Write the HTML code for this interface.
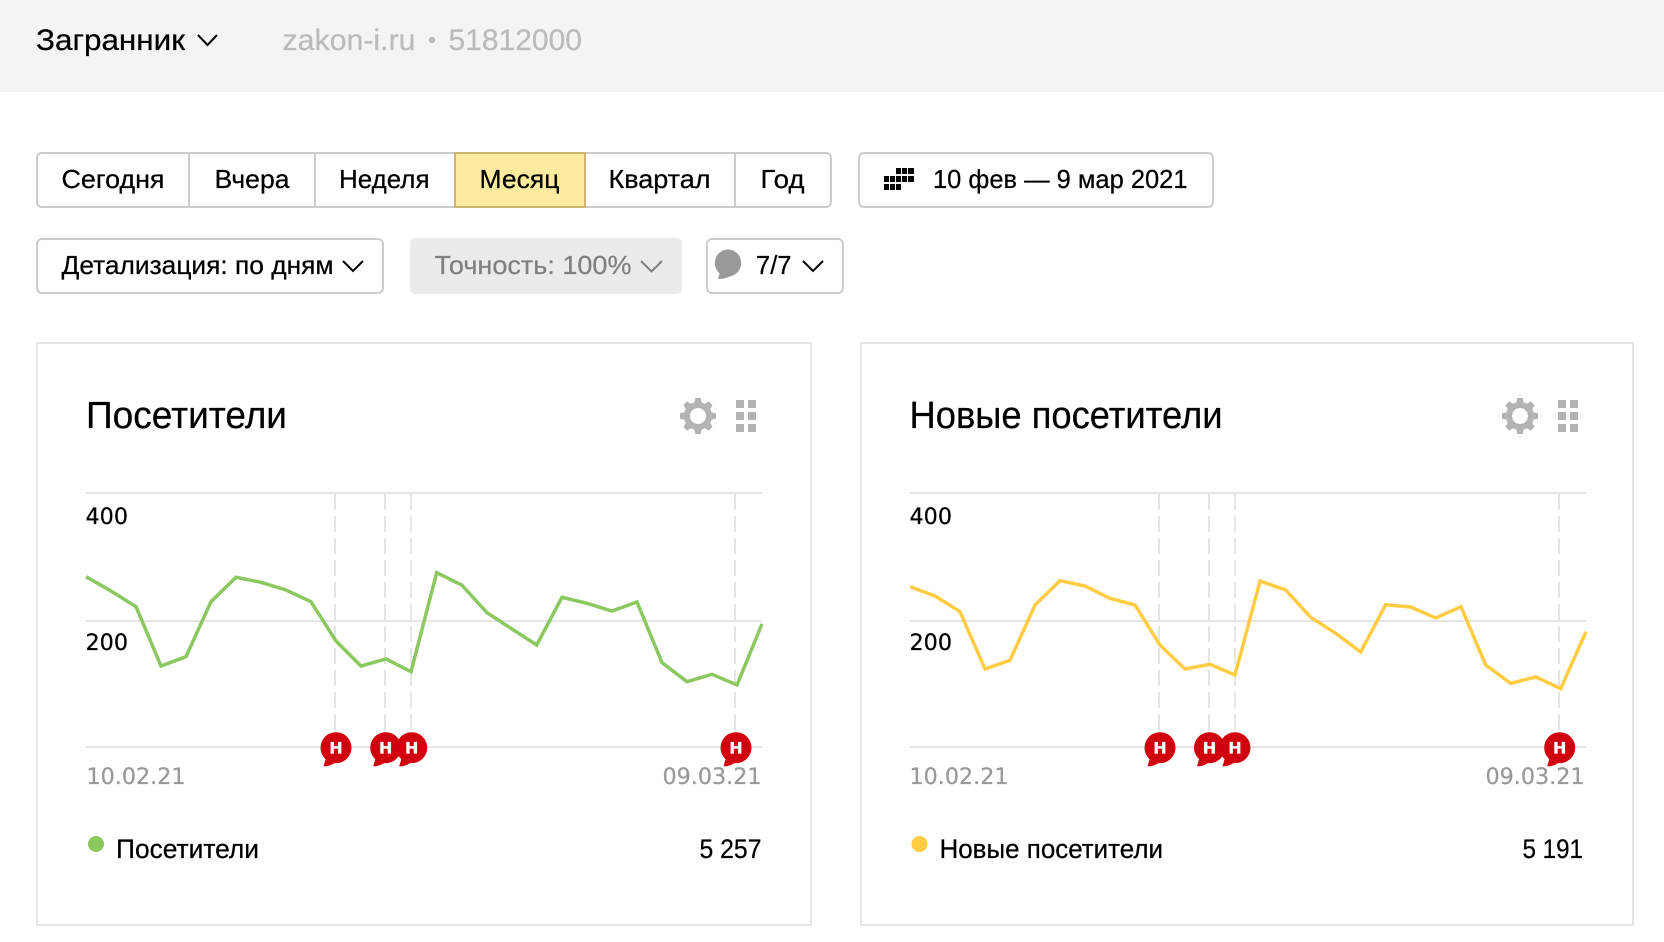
<!DOCTYPE html>
<html lang="ru"><head><meta charset="utf-8"><title>Загранник</title>
<style>
html,body{margin:0;padding:0;background:#fff;width:1664px;height:942px;overflow:hidden}
svg{display:block}
text{font-family:"Liberation Sans",Arial,sans-serif;fill:#000;stroke:#000;stroke-width:.25}
.d{font-family:"DejaVu Sans","Liberation Sans",sans-serif;font-size:22px}
.b{font-size:26px}
.t{font-size:38px}
.l{font-size:27px}
.g{stroke:#e5e5e5;stroke-width:2;fill:none}
.dash{stroke:#e5e5e5;stroke-width:2;stroke-dasharray:16 6;fill:none}
.chev{fill:none;stroke:#000;stroke-width:2}
text.m{font-family:"DejaVu Sans","Liberation Sans",sans-serif;font-size:16px;font-weight:700;fill:#fff;stroke:#fff;text-anchor:middle}
text.gr{fill:#999;stroke:#999}
text.lg{fill:#bbb;stroke:#bbb}
</style></head><body>
<svg width="1664" height="942" viewBox="0 0 1664 942" xmlns="http://www.w3.org/2000/svg">
<defs>
<g id="gear"><circle r="11" fill="none" stroke="#b3b3b3" stroke-width="6"/>
<g fill="#b3b3b3">
<path d="M-4-12.5L-2.6-18H2.6L4-12.5Z"/>
<path d="M-4-12.5L-2.6-18H2.6L4-12.5Z" transform="rotate(45)"/>
<path d="M-4-12.5L-2.6-18H2.6L4-12.5Z" transform="rotate(90)"/>
<path d="M-4-12.5L-2.6-18H2.6L4-12.5Z" transform="rotate(135)"/>
<path d="M-4-12.5L-2.6-18H2.6L4-12.5Z" transform="rotate(180)"/>
<path d="M-4-12.5L-2.6-18H2.6L4-12.5Z" transform="rotate(225)"/>
<path d="M-4-12.5L-2.6-18H2.6L4-12.5Z" transform="rotate(270)"/>
<path d="M-4-12.5L-2.6-18H2.6L4-12.5Z" transform="rotate(315)"/>
</g></g>
<g id="grid" fill="#b3b3b3"><rect width="8" height="8"/><rect x="12" width="8" height="8"/><rect y="12" width="8" height="8"/><rect x="12" y="12" width="8" height="8"/><rect y="24" width="8" height="8"/><rect x="12" y="24" width="8" height="8"/></g>
<g id="mark"><circle r="15.5" fill="#d0000f"/><path d="M-10 10L-12.5 18.6Q-7 19-1 15Z" fill="#d0000f"/></g>
</defs>

<rect width="1664" height="92" fill="#f5f4f2"/>
<text x="36" y="50" font-size="30" textLength="149" lengthAdjust="spacingAndGlyphs">Загранник</text>
<path class="chev" d="M198 35L207.5 45L217 35"/>
<text class="lg" x="282.5" y="50" font-size="30" textLength="133" lengthAdjust="spacingAndGlyphs">zakon-i.ru</text>
<circle cx="432" cy="40" r="3.2" fill="#bbb"/>
<text class="lg" x="448.5" y="50" font-size="30" textLength="133.5" lengthAdjust="spacingAndGlyphs">51812000</text>

<!-- period buttons -->
<rect x="37" y="153" width="794" height="54" rx="5" fill="#fff" stroke="#ccc" stroke-width="2"/>
<rect x="455" y="153" width="130" height="54" fill="#ffeba0" stroke="#cdb56f" stroke-width="2"/>
<path d="M189 153V207M315 153V207M735 153V207" stroke="#ccc" stroke-width="2"/>
<text class="b" x="61.5" y="188" textLength="103" lengthAdjust="spacingAndGlyphs">Сегодня</text>
<text class="b" x="214.5" y="188" textLength="75" lengthAdjust="spacingAndGlyphs">Вчера</text>
<text class="b" x="339" y="188" textLength="90.5" lengthAdjust="spacingAndGlyphs">Неделя</text>
<text class="b" x="479.5" y="188" textLength="80" lengthAdjust="spacingAndGlyphs">Месяц</text>
<text class="b" x="608.5" y="188" textLength="102" lengthAdjust="spacingAndGlyphs">Квартал</text>
<text class="b" x="760.5" y="188" textLength="44" lengthAdjust="spacingAndGlyphs">Год</text>

<!-- date -->
<rect x="859" y="153" width="354" height="54" rx="5" fill="#fff" stroke="#ccc" stroke-width="2"/>
<g fill="#000">
<rect x="896" y="168" width="5" height="6"/><rect x="902" y="168" width="5" height="6"/><rect x="908" y="168" width="6" height="6"/>
<rect x="884" y="176" width="5" height="6"/><rect x="890" y="176" width="5" height="6"/><rect x="896" y="176" width="5" height="6"/><rect x="902" y="176" width="5" height="6"/><rect x="908" y="176" width="6" height="6"/>
<rect x="884" y="184" width="5" height="6"/><rect x="890" y="184" width="5" height="6"/><rect x="896" y="184" width="5" height="6"/>
</g>
<text class="b" x="933" y="188" textLength="254.5" lengthAdjust="spacingAndGlyphs">10 фев — 9 мар 2021</text>

<!-- row 2 -->
<rect x="37" y="239" width="346" height="54" rx="5" fill="#fff" stroke="#ccc" stroke-width="2"/>
<text class="b" x="61.5" y="274" textLength="272" lengthAdjust="spacingAndGlyphs">Детализация: по дням</text>
<path class="chev" stroke-width="2.5" d="M343 261L353 271L363 261"/>

<rect x="410" y="238" width="272" height="56" rx="5" fill="#ebebeb"/>
<text class="b" x="434.5" y="274" style="fill:#808080;stroke:#808080" textLength="197" lengthAdjust="spacingAndGlyphs">Точность: 100%</text>
<path class="chev" style="stroke:#808080" d="M641 261L651.5 271.5L662 261"/>

<rect x="707" y="239" width="136" height="54" rx="5" fill="#fff" stroke="#ccc" stroke-width="2"/>
<ellipse cx="728" cy="263" rx="13.2" ry="13.5" fill="#999"/>
<path d="M720 272L718 279Q725 279 731 276Z" fill="#999"/>
<text class="b" x="756" y="274" textLength="35.5" lengthAdjust="spacingAndGlyphs">7/7</text>
<path class="chev" d="M803 261L813 271L823 261"/>

<!-- card 1 -->
<rect x="37" y="343" width="774" height="582" fill="#fff" stroke="#e5e5e5" stroke-width="2"/>
<text class="t" x="86" y="428" textLength="201" lengthAdjust="spacingAndGlyphs">Посетители</text>
<use href="#gear" x="698" y="416"/>
<use href="#grid" x="736" y="400"/>
<path class="g" d="M86 493H762M86 621H762M86 747H762"/>
<path class="dash" d="M335 494V733M385 494V733M411 494V733M735 494V733"/>
<polyline fill="none" stroke="#8bc860" stroke-width="3.5" points="86,576.7 111,591 136,606.7 161,666 186,656.7 211,601.7 236,577.3 261,582.3 286,590 311,601.7 336,641 361,666 386,659 411,671.7 436.7,572.7 461.7,585 487,612.7 512,629 536.7,645 562,597.3 587,603.3 612,611 637,602 662,662.7 687,681.7 712,674.3 737,685 762,624"/>
<text class="d" x="85.5" y="524" textLength="42.5" lengthAdjust="spacingAndGlyphs">400</text>
<text class="d" x="85.5" y="650" textLength="42.5" lengthAdjust="spacingAndGlyphs">200</text>
<text class="d gr" x="86.5" y="784" textLength="99" lengthAdjust="spacingAndGlyphs">10.02.21</text>
<text class="d gr" x="662.5" y="784" textLength="99" lengthAdjust="spacingAndGlyphs">09.03.21</text>
<use href="#mark" x="336" y="747.7"/><text class="m" x="336" y="753.7">Н</text>
<use href="#mark" x="385.7" y="747.7"/><use href="#mark" x="411.7" y="747.7"/>
<text class="m" x="385.7" y="753.7">Н</text><text class="m" x="411.7" y="753.7">Н</text>
<use href="#mark" x="736" y="747.7"/><text class="m" x="736" y="753.7">Н</text>
<circle cx="96" cy="844" r="8" fill="#8bc860"/>
<text class="l" x="116" y="858" textLength="143" lengthAdjust="spacingAndGlyphs">Посетители</text>
<text class="l" x="699.5" y="858" textLength="62" lengthAdjust="spacingAndGlyphs">5 257</text>

<!-- card 2 -->
<rect x="861" y="343" width="772" height="582" fill="#fff" stroke="#e5e5e5" stroke-width="2"/>
<text class="t" x="909.5" y="428" textLength="313" lengthAdjust="spacingAndGlyphs">Новые посетители</text>
<use href="#gear" x="1520" y="416"/>
<use href="#grid" x="1558" y="400"/>
<path class="g" d="M910 493H1586M910 621H1586M910 747H1586"/>
<path class="dash" d="M1159 494V733M1209 494V733M1235 494V733M1559 494V733"/>
<polyline fill="none" stroke="#ffcc44" stroke-width="3.5" points="910,586.7 935,596 960,611.7 985,669 1010,660.3 1035,605 1060,580.7 1085,586 1110,598.3 1135,605 1160,645 1185,669 1210,664.3 1235,675 1260,581 1285.7,590 1310.7,617.3 1335.7,633.3 1360.7,652 1385.7,604.7 1410.7,607 1435.7,618 1461,606.7 1485.7,665 1510.7,683.3 1536,677 1560.7,688.7 1586,631.7"/>
<text class="d" x="909.5" y="524" textLength="42.5" lengthAdjust="spacingAndGlyphs">400</text>
<text class="d" x="909.5" y="650" textLength="42.5" lengthAdjust="spacingAndGlyphs">200</text>
<text class="d gr" x="909.5" y="784" textLength="99" lengthAdjust="spacingAndGlyphs">10.02.21</text>
<text class="d gr" x="1485.5" y="784" textLength="99" lengthAdjust="spacingAndGlyphs">09.03.21</text>
<use href="#mark" x="1160" y="747.7"/><text class="m" x="1160" y="753.7">Н</text>
<use href="#mark" x="1209.5" y="747.7"/><use href="#mark" x="1235" y="747.7"/>
<text class="m" x="1209.5" y="753.7">Н</text><text class="m" x="1235" y="753.7">Н</text>
<use href="#mark" x="1559.7" y="747.7"/><text class="m" x="1559.7" y="753.7">Н</text>
<circle cx="919.5" cy="844" r="8" fill="#ffcc44"/>
<text class="l" x="939.5" y="858" textLength="223.5" lengthAdjust="spacingAndGlyphs">Новые посетители</text>
<text class="l" x="1522.5" y="858" textLength="60.5" lengthAdjust="spacingAndGlyphs">5 191</text>
</svg>
</body></html>
